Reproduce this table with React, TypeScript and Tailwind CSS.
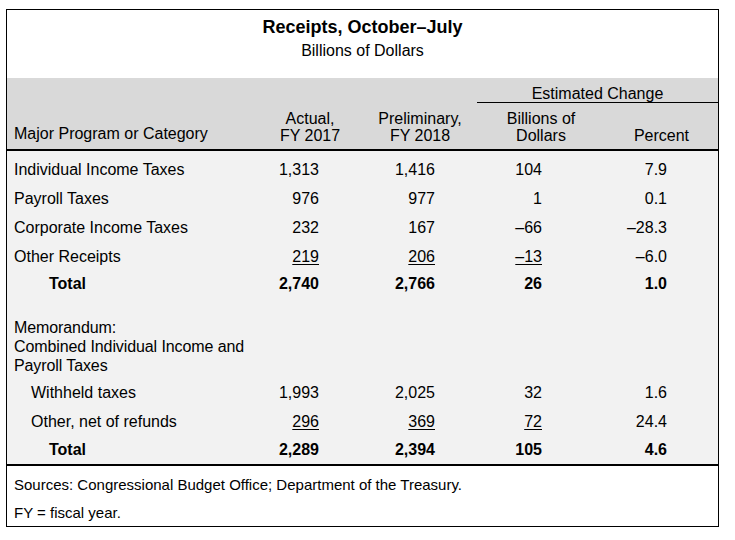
const cols = ["w-[106px] pr-[44px]", "w-[114px] pr-[42px]", "w-[128px] pr-[63px]", "w-[113px] pr-[51px]"];

type Row = { label: string; values: string[]; under?: boolean[]; bold?: boolean; indent?: string; h: string };

const Cell = ({ v, i, u }: { v: string; i: number; u?: boolean }) => (
  <div className={`${cols[i]} text-right`}>
    <span className={u ? "underline underline-offset-[2px]" : ""}>{v}</span>
  </div>
);

const DataRow = ({ r }: { r: Row }) => (
  <div className={`flex items-center ${r.h} ${r.bold ? "font-bold" : ""}`}>
    <div className={`w-[250px] ${r.indent ?? "pl-[7px]"}`}>{r.label}</div>
    {r.values.map((v, i) => (
      <Cell key={i} v={v} i={i} u={r.under?.[i]} />
    ))}
  </div>
);

const top: Row[] = [
  { label: "Individual Income Taxes", values: ["1,313", "1,416", "104", "7.9"], h: "h-[29px]" },
  { label: "Payroll Taxes", values: ["976", "977", "1", "0.1"], h: "h-[29px]" },
  { label: "Corporate Income Taxes", values: ["232", "167", "\u201366", "\u201328.3"], h: "h-[29px]" },
  { label: "Other Receipts", values: ["219", "206", "\u201313", "\u20136.0"], under: [true, true, true, false], h: "h-[29px]" },
  { label: "Total", values: ["2,740", "2,766", "26", "1.0"], bold: true, indent: "pl-[42px]", h: "h-[26px]" },
];

const memo: Row[] = [
  { label: "Withheld taxes", values: ["1,993", "2,025", "32", "1.6"], indent: "pl-[24px]", h: "h-[29px]" },
  { label: "Other, net of refunds", values: ["296", "369", "72", "24.4"], under: [true, true, true, false], indent: "pl-[24px]", h: "h-[29px]" },
  { label: "Total", values: ["2,289", "2,394", "105", "4.6"], bold: true, indent: "pl-[42px]", h: "h-[28px]" },
];

export default function App() {
  return (
    <div className="w-[735px] h-[540px] bg-white pt-[9px] pl-[6px] font-['Liberation_Sans',Arial,sans-serif] text-[16px] text-black">
      <div className="w-[713px] border border-black">
        {/* Title */}
        <div className="h-[68px] flex flex-col items-center pt-[6px]">
          <div className="text-[18px] font-bold leading-[22px]">Receipts, October–July</div>
          <div className="mt-[3px] leading-[19px]">Billions of Dollars</div>
        </div>

        {/* Column heads */}
        <div className="h-[73px] bg-[#d9d9d9] border-b-2 border-black flex items-end pb-[5px] leading-[17px]">
          <div className="w-[250px] pl-[7px] mb-[2px]">Major Program or Category</div>
          <div className="w-[106px] text-center">
            Actual,
            <br />
            FY 2017
          </div>
          <div className="w-[114px] text-center">
            Preliminary,
            <br />
            FY 2018
          </div>
          <div className="w-[241px] flex flex-col self-stretch justify-between">
            <div className="mt-[7px] text-center border-b border-black">Estimated Change</div>
            <div className="flex items-end">
              <div className="w-[128px] text-center">
                Billions of
                <br />
                Dollars
              </div>
              <div className="w-[113px] text-center">Percent</div>
            </div>
          </div>
        </div>

        {/* Body */}
        <div className="bg-[#f2f2f2] border-b-2 border-black pt-[4px]">
          {top.map((r, i) => (
            <DataRow key={i} r={r} />
          ))}
          <div className="mt-[21px] pl-[7px] leading-[19px] tracking-[-0.1px]">
            Memorandum:
            <br />
            Combined Individual Income and
            <br />
            Payroll Taxes
          </div>
          <div className="mt-[3px]">
            {memo.map((r, i) => (
              <DataRow key={i} r={r} />
            ))}
          </div>
        </div>

        {/* Notes */}
        <div className="pl-[7px] pt-[9px] pb-[4px] leading-[19px] text-[15px]">
          <div>Sources: Congressional Budget Office; Department of the Treasury.</div>
          <div className="mt-[9px]">FY = fiscal year.</div>
        </div>
      </div>
    </div>
  );
}
